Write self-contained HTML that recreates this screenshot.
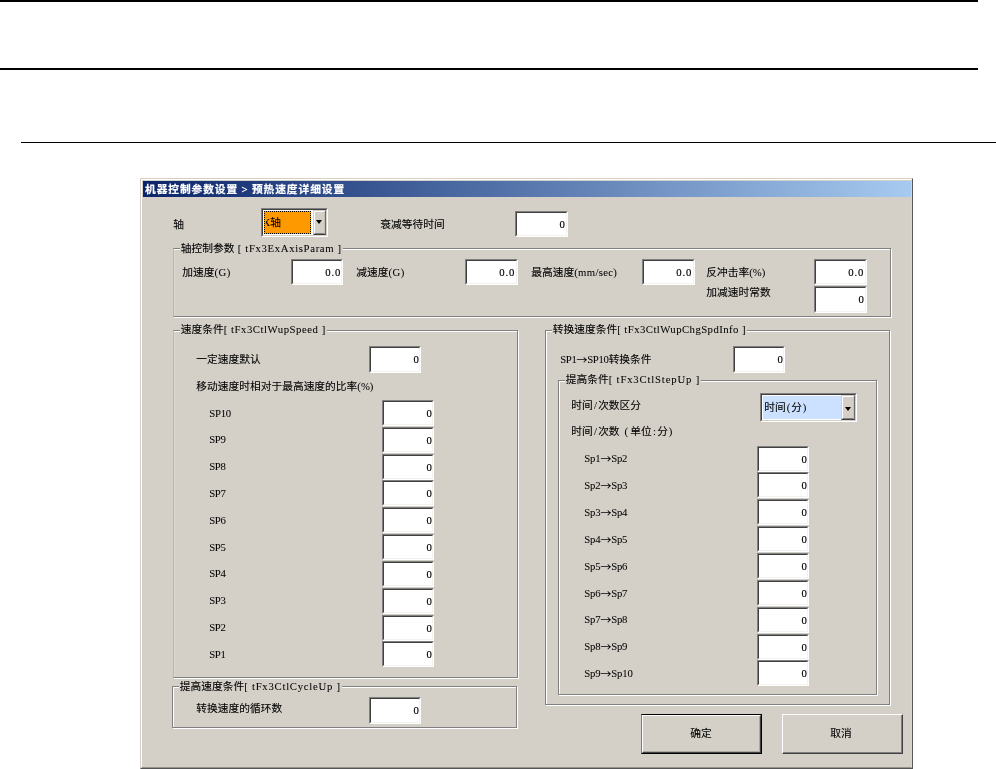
<!DOCTYPE html>
<html lang="zh-CN"><head><meta charset="utf-8"><title>机器控制参数设置</title>
<style>
*{box-sizing:border-box;margin:0;padding:0}
html,body{width:996px;height:769px;overflow:hidden;background:#fff}
body{position:relative;font-family:"Liberation Serif","Noto Sans CJK SC",sans-serif;font-size:10.74px;color:#000;line-height:12px}
.ln{position:absolute;background:#000}
#dlg{position:absolute;left:140px;top:178px;width:773px;height:591px;background:#d4d0c8;
 border-left:1px solid #d4d0c8;border-top:1px solid #d4d0c8;border-right:1px solid #5a5a5a;border-bottom:1px solid #555}
#dlg:before{content:"";position:absolute;left:0;top:0;right:0;bottom:0;border-left:1px solid #fff;border-top:1px solid #fff;border-right:1px solid #d8d4cc;border-bottom:1px solid #959390}
#ttl{position:absolute;left:143px;top:181px;width:768px;height:16px;background:linear-gradient(90deg,#0a246a 0%,#a6caf0 100%)}
#tt{position:absolute;left:145px;top:181px;height:16px;color:#fff;font-weight:bold;line-height:16px;white-space:nowrap;letter-spacing:.9px;-webkit-text-stroke:.2px #fff}
#tt i{font-style:normal;letter-spacing:.8px}
.t{position:absolute;white-space:pre;height:12px;line-height:12px}
.l{font-family:"Liberation Serif",serif;-webkit-text-stroke:.05px #000}
.p{display:inline-block;width:5.37px;text-align:center}
.c{font-family:"Noto Sans CJK SC",sans-serif;position:relative;top:1px}
.d{font-family:"Liberation Serif",serif;font-size:10.74px;-webkit-text-stroke:.15px #000}
.gb{position:absolute;border:1px solid #808080;box-shadow:1px 1px 0 #fff, inset 1px 1px 0 #fff}
.gl{position:absolute;white-space:pre;background:#d4d0c8;height:12px;line-height:12px;padding:0 1px}
.in{position:absolute;background:#fff;border-top:1px solid #808080;border-left:1px solid #808080;border-right:1px solid #fff;border-bottom:1px solid #fff}
.in:before{content:"";position:absolute;left:0;top:0;right:0;bottom:0;border-top:1px solid #404040;border-left:1px solid #404040;border-right:1px solid #f3f2ef;border-bottom:1px solid #f3f2ef}
.n{text-align:right}
#tx{position:absolute;left:0;top:0;width:996px;height:769px;will-change:transform;-webkit-text-stroke:.1px #000}
.btn{position:absolute;background:#d4d0c8;border-top:1px solid #fff;border-left:1px solid #fff;border-right:1px solid #404040;border-bottom:1px solid #404040;text-align:center}
.btn:before{content:"";position:absolute;left:0;top:0;right:0;bottom:0;border-right:1px solid #808080;border-bottom:1px solid #808080}
.ok:before{border-right-color:#aaa8a2;border-bottom-color:#aaa8a2}
.btn>span{position:absolute;left:0;right:0;top:13px;line-height:12px}
.cb{position:absolute;background:#fff;border-top:1px solid #808080;border-left:1px solid #808080;border-right:1px solid #fff;border-bottom:1px solid #fff}
.cb:before{content:"";position:absolute;left:0;top:0;right:0;bottom:0;border-top:1px solid #404040;border-left:1px solid #404040;border-right:1px solid #d4d0c8;border-bottom:1px solid #d4d0c8}
.cbb{position:absolute;background:#d4d0c8;border-top:1px solid #d4d0c8;border-left:1px solid #d4d0c8;border-right:1px solid #6a6a6a;border-bottom:1px solid #404040}
.cbb:before{content:"";position:absolute;left:0;top:0;right:0;bottom:0;border-top:1px solid #fff;border-left:1px solid #fff;border-right:1px solid #c4c1ba;border-bottom:1px solid #808080}
.cbb i{position:absolute;width:0;height:0;border-left:3.75px solid transparent;border-right:3.75px solid transparent;border-top:4px solid #000}
</style></head>
<body>
<div class="ln" style="left:0;top:0;width:978px;height:2px"></div>
<div class="ln" style="left:0;top:68px;width:978px;height:2px"></div>
<div class="ln" style="left:21px;top:142px;width:975px;height:1px"></div>
<div id="dlg"></div>
<div id="ttl"></div>
<div class="cb" style="left:261px;top:208px;width:67px;height:29px"></div>
<div style="position:absolute;left:264px;top:211px;width:47px;height:23px;background:#ff9900;outline:1px dotted #000;outline-offset:-1px"></div>
<div class="cbb" style="left:313px;top:210px;width:13px;height:25px"><i style="left:2.25px;top:9px"></i></div>
<div class="in" style="left:515px;top:211px;width:53px;height:26px"></div>
<div class="gb" style="left:173px;top:248px;width:718px;height:69px;border-left-color:#b6b6b8;box-shadow:1px 1px 0 #fff,inset 0 1px 0 #fff,inset 1px 0 0 #dbd8d1"></div>
<div class="in" style="left:291px;top:259px;width:52px;height:26px"></div>
<div class="in" style="left:465px;top:259px;width:53px;height:26px"></div>
<div class="in" style="left:642px;top:259px;width:53px;height:26px"></div>
<div class="in" style="left:814px;top:259px;width:53px;height:26px"></div>
<div class="in" style="left:814px;top:286px;width:53px;height:27px"></div>
<div class="gb" style="left:173px;top:330px;width:345px;height:348px;border-left-color:#b6b6b8;box-shadow:1px 1px 0 #fff,inset 0 1px 0 #fff,inset 1px 0 0 #dbd8d1"></div>
<div class="in" style="left:369px;top:346px;width:52px;height:27px"></div>
<div class="in" style="left:382px;top:400px;width:52px;height:26px"></div>
<div class="in" style="left:382px;top:427px;width:52px;height:26px"></div>
<div class="in" style="left:382px;top:454px;width:52px;height:26px"></div>
<div class="in" style="left:382px;top:480px;width:52px;height:26px"></div>
<div class="in" style="left:382px;top:507px;width:52px;height:26px"></div>
<div class="in" style="left:382px;top:534px;width:52px;height:26px"></div>
<div class="in" style="left:382px;top:561px;width:52px;height:26px"></div>
<div class="in" style="left:382px;top:588px;width:52px;height:26px"></div>
<div class="in" style="left:382px;top:615px;width:52px;height:26px"></div>
<div class="in" style="left:382px;top:641px;width:52px;height:26px"></div>
<div class="gb" style="left:172px;top:686px;width:345px;height:42px"></div>
<div class="in" style="left:369px;top:697px;width:52px;height:27px"></div>
<div class="gb" style="left:545px;top:330px;width:345px;height:375px"></div>
<div class="in" style="left:733px;top:346px;width:52px;height:27px"></div>
<div class="gb" style="left:558px;top:380px;width:319px;height:315px"></div>
<div class="cb" style="left:760px;top:393px;width:97px;height:29px"></div>
<div style="position:absolute;left:763px;top:396px;width:78px;height:23px;background:#cce0ff"></div>
<div class="cbb" style="left:841px;top:395px;width:14px;height:25px"><i style="left:3.25px;top:10.5px"></i></div>
<div class="in" style="left:757px;top:446px;width:52px;height:26px"></div>
<div class="in" style="left:757px;top:472px;width:52px;height:26px"></div>
<div class="in" style="left:757px;top:499px;width:52px;height:26px"></div>
<div class="in" style="left:757px;top:526px;width:52px;height:26px"></div>
<div class="in" style="left:757px;top:553px;width:52px;height:26px"></div>
<div class="in" style="left:757px;top:580px;width:52px;height:26px"></div>
<div class="in" style="left:757px;top:607px;width:52px;height:26px"></div>
<div class="in" style="left:757px;top:634px;width:52px;height:26px"></div>
<div class="in" style="left:757px;top:660px;width:52px;height:26px"></div>
<div style="position:absolute;left:641px;top:714px;width:121px;height:40px;border:1px solid #000;border-left-color:#7c7c7c"></div>
<div class="btn ok" style="left:642px;top:715px;width:119px;height:38px"></div>
<div class="btn" style="left:782px;top:714px;width:121px;height:40px"></div>
<div id="tx">
<div id="tt">机器控制参数设置<i> &gt; </i>预热速度详细设置</div>
<div class="t" style="left:173.3px;top:217.5px;">轴</div>
<div style="position:absolute;left:265.7px;top:212px;width:40px;height:20px;overflow:hidden"><div class="t" style="left:-3.3px;top:4px"><span class="l">X</span>轴</div></div>
<div class="t" style="left:380.3px;top:217.5px;">衰减等待时间</div>
<div class="t n" style="left:515px;top:218px;width:49.8px"><span class="d" style="letter-spacing:-0.00px">0</span></div>
<div class="gl" style="left:179.8px;top:242.4px">轴控制参数<span class="l" style="letter-spacing:0.64px"> [ tFx3ExAxisParam ]</span></div>
<div class="t" style="left:182.3px;top:265.5px;">加速度<span class="l" style="letter-spacing:0.40px">(G)</span></div>
<div class="t n" style="left:291px;top:266px;width:50.4px"><span class="d" style="letter-spacing:0.90px">0.0</span></div>
<div class="t" style="left:356.3px;top:265.5px;">减速度<span class="l" style="letter-spacing:0.40px">(G)</span></div>
<div class="t n" style="left:465px;top:266px;width:50.4px"><span class="d" style="letter-spacing:0.90px">0.0</span></div>
<div class="t" style="left:531.3px;top:265.5px;">最高速度<span class="l" style="letter-spacing:0.30px">(mm/sec)</span></div>
<div class="t n" style="left:642px;top:266px;width:50.4px"><span class="d" style="letter-spacing:0.90px">0.0</span></div>
<div class="t" style="left:706.3px;top:265.5px;">反冲击率<span class="l" style="letter-spacing:0.01px">(%)</span></div>
<div class="t n" style="left:814px;top:266px;width:50.4px"><span class="d" style="letter-spacing:0.90px">0.0</span></div>
<div class="t" style="left:706.3px;top:285.5px;">加减速时常数</div>
<div class="t n" style="left:814px;top:293px;width:49.8px"><span class="d" style="letter-spacing:-0.00px">0</span></div>
<div class="gl" style="left:179.8px;top:323.4px">速度条件<span class="l" style="letter-spacing:0.53px">[ tFx3CtlWupSpeed ]</span></div>
<div class="t" style="left:196.3px;top:352.5px;">一定速度默认</div>
<div class="t n" style="left:369px;top:353px;width:49.8px"><span class="d" style="letter-spacing:-0.00px">0</span></div>
<div class="t" style="left:196.3px;top:379.5px;">移动速度时相对于最高速度的比率<span class="l" style="letter-spacing:0.01px">(%)</span></div>
<div class="t" style="left:209.3px;top:406.5px;"><span class="l" style="letter-spacing:-0.30px">SP10</span></div>
<div class="t n" style="left:382px;top:407px;width:49.8px"><span class="d" style="letter-spacing:-0.00px">0</span></div>
<div class="t" style="left:209.3px;top:433.3px;"><span class="l" style="letter-spacing:-0.40px">SP9</span></div>
<div class="t n" style="left:382px;top:434px;width:49.8px"><span class="d" style="letter-spacing:-0.00px">0</span></div>
<div class="t" style="left:209.3px;top:460.1px;"><span class="l" style="letter-spacing:-0.40px">SP8</span></div>
<div class="t n" style="left:382px;top:461px;width:49.8px"><span class="d" style="letter-spacing:-0.00px">0</span></div>
<div class="t" style="left:209.3px;top:487.0px;"><span class="l" style="letter-spacing:-0.40px">SP7</span></div>
<div class="t n" style="left:382px;top:487px;width:49.8px"><span class="d" style="letter-spacing:-0.00px">0</span></div>
<div class="t" style="left:209.3px;top:513.8px;"><span class="l" style="letter-spacing:-0.40px">SP6</span></div>
<div class="t n" style="left:382px;top:514px;width:49.8px"><span class="d" style="letter-spacing:-0.00px">0</span></div>
<div class="t" style="left:209.3px;top:540.6px;"><span class="l" style="letter-spacing:-0.40px">SP5</span></div>
<div class="t n" style="left:382px;top:541px;width:49.8px"><span class="d" style="letter-spacing:-0.00px">0</span></div>
<div class="t" style="left:209.3px;top:567.4px;"><span class="l" style="letter-spacing:-0.40px">SP4</span></div>
<div class="t n" style="left:382px;top:568px;width:49.8px"><span class="d" style="letter-spacing:-0.00px">0</span></div>
<div class="t" style="left:209.3px;top:594.2px;"><span class="l" style="letter-spacing:-0.40px">SP3</span></div>
<div class="t n" style="left:382px;top:595px;width:49.8px"><span class="d" style="letter-spacing:-0.00px">0</span></div>
<div class="t" style="left:209.3px;top:621.1px;"><span class="l" style="letter-spacing:-0.40px">SP2</span></div>
<div class="t n" style="left:382px;top:622px;width:49.8px"><span class="d" style="letter-spacing:-0.00px">0</span></div>
<div class="t" style="left:209.3px;top:647.9px;"><span class="l" style="letter-spacing:-0.40px">SP1</span></div>
<div class="t n" style="left:382px;top:648px;width:49.8px"><span class="d" style="letter-spacing:-0.00px">0</span></div>
<div class="gl" style="left:178.8px;top:680.4px">提高速度条件<span class="l" style="letter-spacing:0.73px">[ tFx3CtlCycleUp ]</span></div>
<div class="t" style="left:196.3px;top:701.5px;">转换速度的循环数</div>
<div class="t n" style="left:369px;top:704px;width:49.8px"><span class="d" style="letter-spacing:-0.00px">0</span></div>
<div class="gl" style="left:551.8px;top:323.4px">转换速度条件<span class="l" style="letter-spacing:0.44px">[ tFx3CtlWupChgSpdInfo ]</span></div>
<div class="t" style="left:560.3px;top:352.5px;"><span class="l" style="letter-spacing:-0.40px">SP1</span><span class="c">→</span><span class="l" style="letter-spacing:-0.30px">SP10</span>转换条件</div>
<div class="t n" style="left:733px;top:353px;width:49.8px"><span class="d" style="letter-spacing:-0.00px">0</span></div>
<div class="gl" style="left:564.8px;top:373.4px">提高条件<span class="l" style="letter-spacing:0.81px">[ tFx3CtlStepUp ]</span></div>
<div class="t" style="left:571.3px;top:398.5px;">时间<span class="l p">/</span>次数区分</div>
<div class="t" style="left:764.3px;top:401.0px;">时间<span class="l p">(</span>分<span class="l p">)</span></div>
<div class="t" style="left:571.3px;top:424.5px;">时间<span class="l p">/</span>次数<span class="l" style="letter-spacing:2.24px"> (</span>单位<span class="l p">:</span>分<span class="l p">)</span></div>
<div class="t" style="left:584.3px;top:452.0px;"><span class="l" style="letter-spacing:-0.20px">Sp1</span><span class="c">→</span><span class="l" style="letter-spacing:-0.20px">Sp2</span></div>
<div class="t n" style="left:757px;top:453px;width:49.8px"><span class="d" style="letter-spacing:-0.00px">0</span></div>
<div class="t" style="left:584.3px;top:479.0px;"><span class="l" style="letter-spacing:-0.20px">Sp2</span><span class="c">→</span><span class="l" style="letter-spacing:-0.20px">Sp3</span></div>
<div class="t n" style="left:757px;top:479px;width:49.8px"><span class="d" style="letter-spacing:-0.00px">0</span></div>
<div class="t" style="left:584.3px;top:506.0px;"><span class="l" style="letter-spacing:-0.20px">Sp3</span><span class="c">→</span><span class="l" style="letter-spacing:-0.20px">Sp4</span></div>
<div class="t n" style="left:757px;top:506px;width:49.8px"><span class="d" style="letter-spacing:-0.00px">0</span></div>
<div class="t" style="left:584.3px;top:533.0px;"><span class="l" style="letter-spacing:-0.20px">Sp4</span><span class="c">→</span><span class="l" style="letter-spacing:-0.20px">Sp5</span></div>
<div class="t n" style="left:757px;top:533px;width:49.8px"><span class="d" style="letter-spacing:-0.00px">0</span></div>
<div class="t" style="left:584.3px;top:560.0px;"><span class="l" style="letter-spacing:-0.20px">Sp5</span><span class="c">→</span><span class="l" style="letter-spacing:-0.20px">Sp6</span></div>
<div class="t n" style="left:757px;top:560px;width:49.8px"><span class="d" style="letter-spacing:-0.00px">0</span></div>
<div class="t" style="left:584.3px;top:587.0px;"><span class="l" style="letter-spacing:-0.20px">Sp6</span><span class="c">→</span><span class="l" style="letter-spacing:-0.20px">Sp7</span></div>
<div class="t n" style="left:757px;top:587px;width:49.8px"><span class="d" style="letter-spacing:-0.00px">0</span></div>
<div class="t" style="left:584.3px;top:613.0px;"><span class="l" style="letter-spacing:-0.20px">Sp7</span><span class="c">→</span><span class="l" style="letter-spacing:-0.20px">Sp8</span></div>
<div class="t n" style="left:757px;top:614px;width:49.8px"><span class="d" style="letter-spacing:-0.00px">0</span></div>
<div class="t" style="left:584.3px;top:640.0px;"><span class="l" style="letter-spacing:-0.20px">Sp8</span><span class="c">→</span><span class="l" style="letter-spacing:-0.20px">Sp9</span></div>
<div class="t n" style="left:757px;top:641px;width:49.8px"><span class="d" style="letter-spacing:-0.00px">0</span></div>
<div class="t" style="left:584.3px;top:667.0px;"><span class="l" style="letter-spacing:-0.20px">Sp9</span><span class="c">→</span><span class="l" style="letter-spacing:-0.15px">Sp10</span></div>
<div class="t n" style="left:757px;top:667px;width:49.8px"><span class="d" style="letter-spacing:-0.00px">0</span></div>
<div class="t" style="left:690.3px;top:726.5px;">确定</div>
<div class="t" style="left:830.3px;top:726.5px;">取消</div>
</div>
</body></html>
